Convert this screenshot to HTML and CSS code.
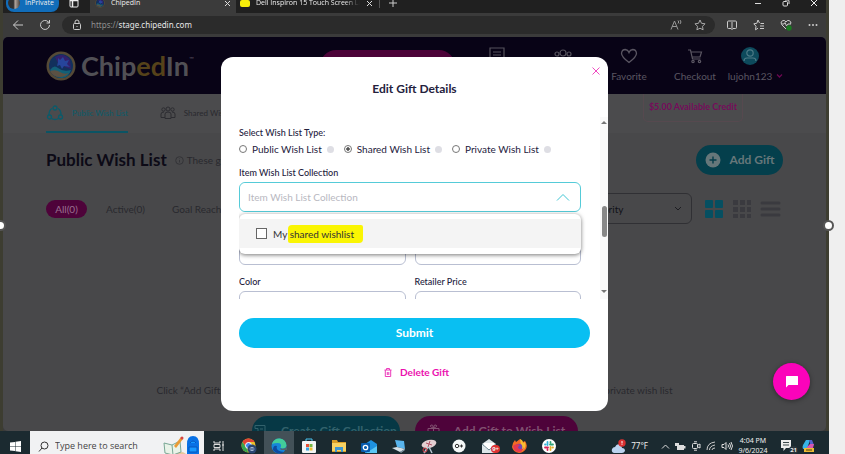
FILE: index.html
```html
<!DOCTYPE html>
<html lang="en">
<head>
<meta charset="utf-8">
<title>ChipedIn</title>
<link rel="stylesheet" href="styles.css">
</head>
<body>
<div class="screen">
  <div class="tabstrip">
    <div class="profile"><span class="avatar"></span>InPrivate</div>
    <svg class="workspaces" width="10" height="10" viewBox="0 0 10 10"><rect x="1" y="1" width="8" height="8" rx="1" fill="none" stroke="#eee"/><path d="M1 2.500h8M3.500 2v7" stroke="#eee" stroke-width="1.500"/></svg>
    <div class="tab tab-active">
      <svg width="10" height="10" viewBox="0 0 30 30"><use href="#chip-logo"/></svg>
      <span class="tab-title">ChipedIn</span><button class="tab-close" aria-label="Close ChipedIn tab"><svg width="7" height="7" viewBox="0 0 7 7" stroke="#ddd"><path d="M1 1l5 5M6 1L1 6"/></svg></button>
    </div>
    <div class="tab">
      <span class="marker"></span>
      <span class="tab-title tab-fade">Dell Inspiron 15 Touch Screen Lap</span><button class="tab-close" aria-label="Close Dell tab"><svg width="7" height="7" viewBox="0 0 7 7" stroke="#ddd"><path d="M1 1l5 5M6 1L1 6"/></svg></button>
    </div>
    <button class="new-tab" aria-label="New tab"><svg width="10" height="10" viewBox="0 0 10 10" stroke="#ccc"><path d="M5 1v8M1 5h8"/></svg></button>
    <div class="window-buttons">
      <svg width="8" height="8" viewBox="0 0 8 8" stroke="#ddd"><path d="M1 4.500h6"/></svg>
      <svg width="8" height="8" viewBox="0 0 8 8" stroke="#ddd" fill="none"><rect x="1" y="2.500" width="4.500" height="4.500" rx="1"/><path d="M3 1h3q1 0 1 1v3"/></svg>
      <svg width="8" height="8" viewBox="0 0 8 8" stroke="#eee"><path d="M1 1l6 6M7 1l-6 6"/></svg>
    </div>
  </div>
  <div class="toolbar">
    <button class="tool" aria-label="Back"><svg width="12" height="12" viewBox="0 0 12 12" fill="none" stroke="#ccc"><path d="M11 6H1.500M6 1.500L1.500 6L6 10.500"/></svg></button>
    <button class="tool" aria-label="Reload"><svg width="12" height="12" viewBox="0 0 12 12" fill="none" stroke="#ccc"><path d="M10.500 6a4.500 4.500 0 1 1-1.300-3.200L10.500 4M10.500 1v3h-3"/></svg></button>
    <div class="address">
      <svg width="10" height="12" viewBox="0 0 10 12" fill="none" stroke="#ccc"><rect x="1.500" y="4.500" width="7" height="6" rx="1"/><path d="M3 4.500V3a2 2 0 0 1 4 0v1.500M5 7v1"/></svg>
      <span class="url">https://<b>stage.chipedin.com</b></span>
      <svg width="12" height="12" viewBox="0 0 12 12" fill="none" stroke="#999"><path d="M1 10.500L4.500 2L8 10.500M2.200 7.500h4.600M8 1.500q1.500 1.500 0 3M10 1q2 2 0 4"/></svg>
      <svg width="12" height="12" viewBox="0 0 12 12" fill="none" stroke="#aaa"><path d="M6 1l1.500 3.300 3.500.5-2.500 2.500.6 3.500L6 9.200 2.900 10.800l.6-3.500L1 4.800l3.500-.5z"/></svg>
    </div>
    <div class="browser-actions">
      <svg width="12" height="12" viewBox="0 0 12 12" fill="none" stroke="#ccc"><path d="M5 2H2.500q-1 0-1 1v5.500q0 1 1 1H5M7 2h2.500q1 0 1 1v5.500q0 1-1 1H7M6 1v10"/></svg>
      <svg width="12" height="12" viewBox="0 0 12 12" fill="none" stroke="#ccc"><path d="M6.500 4L5 1 3.800 4.300.8 4.800 3 7.200l-.5 3.600L5 9.200M7.500 4.500H11M7 7h4M7 9.500h4"/></svg>
      <svg width="12" height="12" viewBox="0 0 12 12" fill="none" stroke="#ccc"><path d="M6 10L1.500 5.500Q0 2.500 3 1.500 5 1 6 3 7 1 9 1.500q3 1 1.500 4M2 5h2l1-1.500L6.500 7 8 5h2"/><circle cx="9" cy="9" r="2.700" fill="#187a20" stroke="none"/></svg>
      <svg width="12" height="12" viewBox="0 0 12 12" fill="#ccc"><circle cx="2.500" cy="6" r="1"/><circle cx="6" cy="6" r="1"/><circle cx="9.500" cy="6" r="1"/></svg>
    </div>
  </div>

  <main class="page">
    <header class="site-header">
      <a class="brand" href="#">
        <svg width="30" height="30" viewBox="0 0 30 30"><g id="chip-logo"><circle cx="15" cy="15" r="14.500" fill="#554a36"/><circle cx="15" cy="15" r="12" fill="#12305c"/><path d="M9 6q9-5 15 3l1 9-6-2-4-3-3-1z" fill="#32206b"/><path d="M12 7l2 2 3-3 2 4 4-1-2 4 3 3-6-1-2 3-2-4-3 1 1-4z" fill="#27459b"/><path d="M4 19q4-6 8-2 5 4 13 2-2 7-9 8-8 0-12-8z" fill="#126078"/><path d="M4 20q6-2 10 1t9 1q-4 4-9 4-7 0-10-6z" fill="#5b5143"/></g></svg>
        <span class="wordmark">Chip<em>ed</em>In</span><small>™</small>
      </a>
      <button class="header-cta" aria-label="Add gift"></button>
      <nav class="header-nav">
        <a href="#" aria-label="Lists"><svg width="18" height="18" viewBox="0 0 18 18" fill="none" stroke="#55525c" stroke-width="1.200"><path d="M2 16V1h14v9M5 5h8M5 8h8M5 11h5"/></svg></a>
        <a href="#" aria-label="Friends"><svg width="20" height="18" viewBox="0 0 20 18" fill="none" stroke="#55525c" stroke-width="1.200"><circle cx="10" cy="6" r="3"/><circle cx="4" cy="7" r="2"/><circle cx="16" cy="7" r="2"/></svg></a>
        <a href="#"><svg width="18" height="18" viewBox="0 0 18 18" fill="none" stroke="#5a5662" stroke-width="1.300"><path d="M9 15.500Q1.500 10 1.500 6.300 2 2.500 5.300 2.500 8 2.800 9 5.500 10 2.800 12.700 2.500 16 2.500 16.500 6.300 16.500 10 9 15.500z"/></svg>Favorite</a>
        <a href="#"><svg width="18" height="18" viewBox="0 0 18 18" fill="none" stroke="#5a5662" stroke-width="1.200"><path d="M2 3h2.500l2 9h8M5 5h10.500l-1.500 5H6"/><circle cx="7" cy="14.500" r="1.200"/><circle cx="13.500" cy="14.500" r="1.200"/></svg>Checkout</a>
        <a class="user" href="#"><svg width="18" height="18" viewBox="0 0 18 18"><circle cx="9" cy="9" r="9" fill="#0d4a5c"/><g fill="none" stroke="#4d7a86" stroke-width="1.200"><circle cx="9" cy="6" r="3.200"/><path d="M3 14q0-3 3-3h6q3 0 3 3"/></g></svg>lujohn123</a>
        <svg class="user-caret" width="7" height="6" viewBox="0 0 7 6" fill="none" stroke="#6a0850" stroke-width="1.300"><path d="M1 1.500l2.500 2.500L6 1.500"/></svg>
      </nav>
    </header>

    <nav class="list-tabs">
      <a class="list-tab current" href="#"><svg width="18" height="16" viewBox="0 0 18 16" fill="none" stroke="#0b5b6b" stroke-width="1.300"><path d="M6 3.500Q3 5 3 10M12 3.500q3 1.500 3 6.500M5.500 13.500q3.500 2 7 0"/><circle cx="9" cy="3" r="2"/><circle cx="3.500" cy="12" r="2"/><circle cx="14.500" cy="12" r="2"/></svg>Public Wish List</a>
      <a class="list-tab" href="#"><svg width="16" height="14" viewBox="0 0 16 14" fill="none" stroke="#2c2c31"><circle cx="8" cy="3" r="2"/><circle cx="3.500" cy="3.500" r="1.700"/><circle cx="12.500" cy="3.500" r="1.700"/><path d="M5 12.500V8q0-2 3-2t3 2v4.500zM5 11.500H1V8q0-2 3-2M11 11.500h4V8q0-2-3-2"/></svg>Shared Wish List</a>
      <span class="credit">$5.00 Available Credit</span>
    </nav>

    <section class="content">
      <div class="title-row">
        <h1>Public Wish List</h1>
        <p><svg width="9" height="9" viewBox="0 0 9 9" fill="none" stroke="#343438"><circle cx="4.500" cy="4.500" r="3.800"/><path d="M4.500 4v2.500M4.500 2.500v.6"/></svg>These gifts</p>
        <button class="add-gift"><svg width="16" height="16" viewBox="0 0 16 16"><circle cx="8" cy="8" r="7.500" fill="#66777a"/><path d="M8 4.500v7M4.500 8h7" stroke="#053d4a" stroke-width="1.400"/></svg>Add Gift</button>
      </div>
      <div class="filter-row">
        <button class="chip chip-on">All(0)</button>
        <button class="chip">Active(0)</button>
        <button class="chip">Goal Reached</button>
        <div class="sort">
          <select aria-label="Sort"><option>Priority</option></select>
          <svg width="8" height="6" viewBox="0 0 8 6" fill="none" stroke="#1d1d22"><path d="M1 1l3 3 3-3"/></svg>
        </div>
        <svg width="20" height="20" viewBox="0 0 20 20" fill="#064f61"><rect x="1" y="1" width="8" height="8" rx="1"/><rect x="11" y="1" width="8" height="8" rx="1"/><rect x="1" y="11" width="8" height="8" rx="1"/><rect x="11" y="11" width="8" height="8" rx="1"/></svg>
        <svg width="20" height="20" viewBox="0 0 20 20" fill="#3a3a3f"><path d="M1 1h5v5H1zM8 1h5v5H8zM15 1h4v5h-4zM1 8h5v5H1zM8 8h5v5H8zM15 8h4v5h-4zM1 15h5v4H1zM8 15h5v4H8zM15 15h4v4h-4z"/></svg>
        <svg width="21" height="20" viewBox="0 0 21 20" stroke="#3a3a3f" stroke-width="3" stroke-linecap="round"><path d="M2 4h17M2 10h17M2 16h17"/></svg>
      </div>
      <div class="hint"><span>Click “Add Gift</span><span>private wish list</span></div>
      <div class="bottom-actions">
        <button class="create"><svg width="13" height="14" viewBox="0 0 13 14" fill="none" stroke="#33626c"><path d="M1 1.500h10v11H4v-8H1zM6 5h3M6 8h3"/></svg>Create Gift Collection</button>
        <button class="wish"><svg width="13" height="14" viewBox="0 0 13 14" fill="none" stroke="#805070"><path d="M1 4.500h11v3H1zM2 7.500h9v5H2zM6.500 4v9M6.500 4Q2 3 4 1q2-1 2.500 3 .5-4 2.500-3 2 2-2.500 3"/></svg>Add Gift to Wish List</button>
      </div>
    </section>

    <div class="overlay">
      <form class="modal" role="dialog" aria-label="Edit Gift Details">
        <button type="button" class="modal-close" aria-label="Close"><svg width="8" height="8" viewBox="0 0 8 8" stroke="#ee4cc0"><path d="M.5 .5l7 7M7.500 .5l-7 7"/></svg></button>
        <h2>Edit Gift Details</h2>
        <div class="scroller">
          <div class="fields">
            <fieldset class="types">
              <legend>Select Wish List Type:</legend>
              <div class="radios">
                <label><input type="radio" name="type">Public Wish List<i class="info"></i></label>
                <label><input type="radio" name="type" checked>Shared Wish List<i class="info"></i></label>
                <label><input type="radio" name="type">Private Wish List<i class="info"></i></label>
              </div>
            </fieldset>
            <div class="field collection">
              <label for="collection">Item Wish List Collection</label>
              <div class="combo">
                <input id="collection" type="text" placeholder="Item Wish List Collection">
                <svg width="14" height="8" viewBox="0 0 14 8" fill="none" stroke="#3fc5d3"><path d="M1 7.500l6-6 6 6"/></svg>
              </div>
              <div class="menu">
                <label class="option"><input type="checkbox"><span>My <mark>shared wishlist</mark></span></label>
              </div>
            </div>
            <div class="pairs">
              <div class="field"><label for="brand">Brand</label><input id="brand" type="text"></div>
              <div class="field"><label for="size">Size</label><input id="size" type="text"></div>
              <div class="field"><label for="color">Color</label><input id="color" type="text"></div>
              <div class="field"><label for="price">Retailer Price</label><input id="price" type="text"></div>
            </div>
          </div>
          <div class="track"><i class="arrow-up"></i><i class="thumb"></i><i class="arrow-down"></i></div>
        </div>
        <button type="submit" class="submit">Submit</button>
        <button type="button" class="delete"><svg width="8" height="9" viewBox="0 0 8 9" fill="none" stroke="#ec3bbb"><path d="M.5 2h7M2.500 2V.5h3V2M1.300 2v6.500h5.400V2M3.300 4v3M4.800 4v3"/></svg>Delete Gift</button>
      </form>
    </div>
    <button class="chat" aria-label="Chat"><svg width="14" height="13" viewBox="0 0 14 13"><path d="M1.500 1h11q.5 0 .5.500V9.500q0 .5-.5.500H3.500L1 12.500V1.500Q1 1 1.500 1z" fill="#fff"/></svg></button>
  </main>

  <footer class="taskbar">
    <button class="start" aria-label="Start"><svg width="11" height="11" viewBox="0 0 11 11" fill="#fff"><path d="M0 1.500L5 1v4H0zM5.500 .8L11 0v5H5.500zM0 5.500h5v4.500L0 9.500zM5.500 5.500H11V11l-5.500-.8z"/></svg></button>
    <div class="search">
      <svg width="11" height="11" viewBox="0 0 11 11" fill="none" stroke="#333"><circle cx="6.500" cy="4.500" r="3.500"/><path d="M4 7L1 10.500"/></svg>
      <input type="text" aria-label="Search" placeholder="Type here to search">
      <svg width="44" height="22" viewBox="0 0 40 22"><path d="M0 22q6-6 13-4 8-4 14 4z" fill="#e7c79c"/><path d="M2 8l8 2 8-4 1 11-8 3-8-2z" fill="#e9f3e8" stroke="#79a795"/><path d="M10 10l1 10" stroke="#79a795"/><path d="M12 11L19 2l2 2-7 9z" fill="#e99b35"/><circle cx="20" cy="3" r="1.500" fill="#d84444"/><path d="M25 9q0-8 6-8t6 8v10H25z" fill="#0871e5"/><path d="M27 12h8v5h-8zM28 8q3-4 6 0" fill="#1698ff" stroke="#0757bd"/></svg>
    </div>
    <div class="apps">
      <span class="app"><svg width="12" height="12" viewBox="0 0 12 12" fill="none" stroke="#ddd"><path d="M1 1v2h6V1M1 11V9h6v2M1 4.500h6v3H1zM10 1v10M9 5h2"/></svg></span>
      <span class="app"><svg width="16" height="16" viewBox="0 0 16 16"><circle cx="7.500" cy="7.500" r="7" fill="#efc029"/><path d="M1.500 4a7 7 0 0 1 12 0H7.500L5 9z" fill="#e24335"/><path d="M1.500 4L6 11l1 3.500A7 7 0 0 1 1.500 4z" fill="#36a451"/><circle cx="7.500" cy="7.500" r="3" fill="#4386ee" stroke="#fff"/><circle cx="11" cy="11" r="4.500" fill="#2b4774"/><path d="M8.500 11h5M9.500 9.500h3M9.500 12.500h3" stroke="#9fb3d1"/></svg></span>
      <span class="app app-on"><svg width="16" height="16" viewBox="0 0 16 16"><circle cx="8" cy="8" r="7.500" fill="#1686d9"/><path d="M1 6Q3 0 9 .5q6 1 6.500 7-1 4-6 2.500 2-5-3-5-3 0-5.500 1z" fill="#42cd9a"/><path d="M6 8q-2 5 7 6-6 4-11-2Q2 7 6 8z" fill="#0e4aa0"/><path d="M9 10q3 2 7-1v3H10z" fill="#50666a"/></svg></span>
      <span class="app"><svg width="14" height="16" viewBox="0 0 14 16"><path d="M4 4V1h6v3" fill="none" stroke="#4ac3ef"/><rect y="3" width="14" height="12" rx="1" fill="#f2f4f4"/><path d="M4 6h3v3H4z" fill="#e94e35"/><path d="M7.500 6h3v3h-3z" fill="#75b843"/><path d="M4 9.500h3v3H4z" fill="#34a3e5"/><path d="M7.500 9.500h3v3h-3z" fill="#efbd30"/></svg></span>
      <span class="app"><svg width="14" height="14" viewBox="0 0 14 14"><path d="M0 1h5l1 2h8v10H0z" fill="#d99f28"/><path d="M0 4h14v8H0z" fill="#f6d263"/><path d="M3 13V8h8v5H9v-2H5v2z" fill="#3d97d2"/></svg></span>
      <span class="app"><svg width="16" height="15" viewBox="0 0 16 15"><path d="M4 5l6-4 6 4v9H4z" fill="#1e91df"/><path d="M5 14l11-7v7z" fill="#5bc7f5"/><rect y="4" width="9" height="9" rx="1" fill="#075cae"/><circle cx="4.500" cy="8.500" r="2.200" fill="none" stroke="#fff" stroke-width="1.300"/></svg></span>
      <span class="app"><svg width="15" height="14" viewBox="0 0 15 14"><path d="M3 1l9 1 1 8-8-2z" fill="#58b4ec"/><path d="M0 9l5-1 8 2-5 3z" fill="#d4dfe5"/><path d="M8 13l5-3v1l-4 3z" fill="#849ba7"/></svg></span>
      <span class="app"><svg width="16" height="15" viewBox="0 0 16 15"><ellipse cx="8" cy="5" rx="7.500" ry="4" fill="#e3cfd2" transform="rotate(-14 8 5)"/><path d="M5 4l6 2M9 2L7 8" stroke="#b35468"/><path d="M7 8l-4 6M8 8l3 6" stroke="#b9c6d2" stroke-width="1.500"/><circle cx="4" cy="11" r="2" fill="none" stroke="#d43e48"/></svg></span>
      <span class="app"><svg width="14" height="14" viewBox="0 0 14 14"><circle cx="7" cy="7" r="6.500" fill="#f5f8f8"/><circle cx="5" cy="7" r="1.700" fill="none" stroke="#333"/><path d="M7.500 7H11M9.500 5.500v3" stroke="#333"/></svg></span>
      <span class="app"><svg width="17" height="16" viewBox="0 0 17 16"><path d="M1 6l7-5 7 5v9H1z" fill="#dce5e8"/><path d="M3 5h10v4l-5 3-5-3z" fill="#fff"/><path d="M1 6l7 6 7-6" fill="none" stroke="#6c8792"/></svg><b class="badge badge-red">9+</b></span>
      <span class="app"><svg width="15" height="16" viewBox="0 0 15 16"><path d="M1 5l2-3 1 2 4-3 3 3 2-1q3 4 1 8-3 4-7 4-6-1-7-6z" fill="#f46a24"/><path d="M8 1q3 1 3 4l2-1q2 6-3 9z" fill="#f8bf30"/><circle cx="7" cy="9" r="3.300" fill="#7645b5"/><path d="M1 8q3-3 7-1-2 1-2 3 4 3 6-1-1 5-5 5-5 0-6-6z" fill="#e63850"/></svg></span>
      <span class="app"><svg width="14" height="14" viewBox="0 0 14 14"><circle cx="7" cy="7" r="7" fill="#fff"/><g stroke-width="1.800" stroke-linecap="round"><path d="M5.500 3v3M3 5.500h.5" stroke="#36b4da"/><path d="M8 5.500h3M8.500 3v.5" stroke="#30a477"/><path d="M8.500 8v3M10.500 8.500h.5" stroke="#e5ac2c"/><path d="M3 8.500h3M5.500 10.500v.5" stroke="#d52458"/></g></svg></span>
    </div>
    <div class="weather"><svg width="15" height="15" viewBox="0 0 15 15"><path d="M3 14q-3-1-2-4 1-2 3-2 2-4 5-2 2 1 2 3 3 0 3 3-1 2-3 2z" fill="#bcd3ef"/><circle cx="11" cy="4" r="3.700" fill="#d83030"/><path d="M11 2v2.500M11 5.300v.7" stroke="#fff"/></svg>77°F</div>
    <div class="tray">
      <svg width="9" height="9" viewBox="0 0 9 9" fill="none" stroke="#ddd"><path d="M1 6.500L4.500 3 8 6.500"/></svg>
      <svg width="11" height="9" viewBox="0 0 11 9"><path d="M2 3h7v5H2z" fill="#ddd"/><path d="M0 1h4v3H0zM9 4h1.500v2.500H9z" fill="#ddd"/></svg>
      <svg width="10" height="10" viewBox="0 0 10 10" fill="none" stroke="#ddd"><rect x="1.500" y="2.500" width="5" height="5" rx="1"/><path d="M3 .8h3M3 9.200h3M7 4l2-1v4L7 6"/></svg>
      <svg width="10" height="10" viewBox="0 0 10 10" fill="none" stroke="#ccc"><path d="M1 9Q1 2 9 1M3.500 9q0-4 5.500-5M6 9q0-2 3-2"/></svg>
      <svg width="12" height="10" viewBox="0 0 12 10" fill="none" stroke="#ddd"><path d="M1 3.500h2L5 1.500v7l-2-2H1zM7 3.500q1 1.500 0 3M8.500 2q2 3 0 6M10 1q3 4 0 8"/></svg>
    </div>
    <div class="clock"><span>4:04 PM</span><span>9/6/2024</span></div>
    <div class="notices"><svg width="13" height="12" viewBox="0 0 13 12"><path d="M1 0h10v8H6L3.500 11V8H1z" fill="#eee"/><path d="M3 2.500h6M3 5h6" stroke="#3b484b"/></svg><b class="badge badge-dark">21</b></div>
    <svg class="copilot" width="13" height="14" viewBox="0 0 13 14"><path d="M4 1h4l-3 9H1q-1-2 0-4z" fill="#36b2e5"/><path d="M7 1h3l2 5-3 2z" fill="#5461ce"/><path d="M5 8l3-3h4l-2 8H4z" fill="#d657b2"/><path d="M2 9h10v4H2z" fill="#edba35"/><path d="M4 11h6" stroke="#4f3d12"/></svg>
  </footer>
  <i class="handle handle-left"></i><i class="handle handle-right"></i>
</div>
</body>
</html>
```
FILE: styles.css
```css
* { box-sizing: border-box; }
body { margin: 0; height: 100vh; overflow: hidden; background: #efefef; font-family: Lato, "Liberation Sans", sans-serif; font-size: 10px; line-height: 12px; }
button, input, select { font: inherit; margin: 0; }
button { border: 0; padding: 0; background: none; color: inherit; display: flex; align-items: center; justify-content: center; }
a { color: inherit; text-decoration: none; }
h1, h2, p { margin: 0; }
svg { flex: none; display: block; }

.screen { position: relative; height: 100vh; margin-right: 16px; border: solid #3d3d31; border-width: 0 3px; display: flex; flex-direction: column; background: #3b3b3b; }

.tabstrip { flex: none; height: 20px; margin-top: -7px; display: flex; align-items: center; background: #202020; color: #eee; font: 7px/10px "Open Sans", sans-serif; }
.profile { flex: none; height: 18px; width: 53px; border-radius: 8px; background: #116dba; display: flex; align-items: center; gap: 5px; padding-left: 2px; margin: 0 10px 0 3px; }
.avatar { flex: none; width: 12px; height: 12px; border-radius: 50%; background: linear-gradient(90deg, #313131 45%, #b0a49c 60%, #46403c); }
.workspaces { margin-right: 11px; }
.tab { height: 20px; display: flex; align-items: center; gap: 6px; width: 142px; padding: 0 5px 0 4px; }
.tab-active { background: #3b3b3b; width: 146px; padding-left: 5px; border-radius: 6px 6px 0 0; }
.tab-title { flex: 1; overflow: hidden; white-space: nowrap; }
.tab-fade { -webkit-mask-image: linear-gradient(90deg, #000 85%, transparent); mask-image: linear-gradient(90deg, #000 85%, transparent); }
.marker { width: 10px; height: 7px; border-radius: 2px; background: #f7ee0a; }
.new-tab { border-left: 1px solid #555; padding-left: 8px; margin-left: 1px; }
.window-buttons { margin-left: auto; display: flex; gap: 20px; padding-right: 8px; }

.toolbar { flex: none; height: 24px; display: flex; align-items: center; background: #3b3b3b; }
.tool { width: 27px; }
.tool:first-child { margin-left: 1px; }
.address { flex: 1; height: 18px; margin-left: 4px; padding: 0 9px 0 10px; border-radius: 9px; background: #2b2b2b; display: flex; align-items: center; gap: 12px; }
.url { flex: 1; color: #8f8f8f; font: 8px/12px "Noto Sans", sans-serif; margin-left: -3px; }
.url b { color: #e8e8e8; font-weight: 400; }
.browser-actions { display: flex; gap: 15px; padding: 0 7px 0 11px; }

.page { position: relative; flex: 1; min-height: 0; overflow: hidden; display: flex; flex-direction: column; border-radius: 5px; background: #48484a; color: #29292e; }
.site-header { flex: none; height: 57px; padding: 0 43px; display: flex; background: #080316; color: #5a5662; }
.brand { display: flex; align-items: center; margin-right: auto; }
.wordmark { font-size: 27px; line-height: 32px; font-weight: 700; color: #515055; margin-left: 5px; }
.wordmark em { font-style: normal; color: #55421a; }
.brand small { font-size: 6px; align-self: flex-start; margin-top: 16px; }
.header-cta { width: 135px; height: 32px; margin: 13px 9px 0 0; border-radius: 16px; background: #4c0338; }
.header-nav { display: flex; padding-top: 10px; }
.header-nav a { width: 66px; display: flex; flex-direction: column; align-items: center; gap: 5px; }
.header-nav .user { width: 44px; }
.user-caret { margin: 26px 0 0 4px; }

.list-tabs { flex: none; height: 39px; padding: 0 83px 0 43px; display: flex; gap: 32px; background: #4b4b4d; font-size: 9px; }
.list-tab { display: flex; align-items: center; gap: 8px; border-bottom: 2px solid transparent; white-space: nowrap; font-size: 8px; }
.current { color: #0b5b6b; border-color: #0b5464; }
.credit { margin-left: auto; align-self: flex-start; height: 28px; padding: 7px 5px; border: 1px solid #56494f; border-top: 0; border-radius: 0 0 5px 5px; color: #760b5b; font-weight: 700; }

.content { flex: 1; min-height: 0; padding: 12px 43px 0; display: flex; flex-direction: column; }
.title-row, .filter-row { display: flex; align-items: center; }
.title-row h1 { font-size: 17px; line-height: 22px; font-weight: 700; color: #0c0a16; }
.title-row p { display: flex; align-items: center; gap: 3px; margin-left: 8px; }
.add-gift { margin-left: auto; height: 30px; width: 87px; border-radius: 15px; gap: 9px; background: #043f4c; color: #66777a; font-size: 12px; font-weight: 700; }
.filter-row { margin-top: 18px; gap: 8px; padding-right: 2px; }
.chip { height: 18px; padding: 0 8px; border-radius: 9px; margin-right: 3px; }
.chip-on { width: 41px; background: #4e033a; color: #9a7090; }
.sort { margin-left: auto; margin-right: 4px; width: 130px; height: 31px; padding-right: 9px; display: flex; align-items: center; border: 1px solid #303034; border-radius: 6px; }
.sort select { flex: 1; appearance: none; padding: 0 28px; height: 29px; border: 0; background: none; color: #111118; }
.hint { width: 516px; max-width: 100%; margin: 160px auto 0; display: flex; justify-content: space-between; }
.bottom-actions { display: flex; justify-content: center; gap: 15px; margin-top: 20px; font-size: 12px; font-weight: 700; }
.bottom-actions button { height: 30px; border-radius: 15px; gap: 14px; white-space: nowrap; }
.create { width: 148px; background: #063845; color: #33626c; }
.wish { width: 163px; background: #4e033a; color: #805070; }

.overlay { position: absolute; inset: 0; display: grid; place-items: center; }
.modal { position: relative; width: 387px; padding: 24px 0 33px 18px; border-radius: 12px; background: #fff; color: #24213d; }
.modal-close { position: absolute; top: 10px; right: 8px; }
.modal h2 { font-size: 12px; line-height: 16px; font-weight: 700; text-align: center; padding-right: 18px; }
.scroller { height: 182px; margin-top: 20px; overflow: hidden; display: flex; justify-content: space-between; }
.fields { width: 342px; padding-top: 10px; font-size: 9px; }
.types { border: 0; padding: 0; margin: 0; min-width: 0; }
.types legend { padding: 0; font-weight: 500; }
.radios { display: flex; gap: 10px; margin-top: 4px; margin-bottom: 12px; font-size: 10px; }
.radios label { display: flex; align-items: center; white-space: nowrap; }
.radios input { appearance: none; width: 8px; height: 8px; margin-right: 5px; border: 1px solid #777; border-radius: 50%; }
.radios input:checked { background: radial-gradient(#555 35%, #fff 45%); }
.info { width: 7px; height: 7px; border-radius: 50%; background: #dedee4; margin-left: 5px; }
.field { display: flex; flex-direction: column; gap: 3px; }
.field > label { font-weight: 500; }
.field input[type="text"] { width: 100%; height: 30px; border: 1px solid #b9bfd2; border-radius: 6px; padding: 0 8px; background: #fff; }
.collection { position: relative; margin-bottom: 8px; }
.combo { height: 30px; display: flex; align-items: center; border: 1px solid #55cbd8; border-radius: 6px; padding-right: 10px; }
.field .combo input[type="text"] { flex: 1; height: 28px; border: 0; font-size: 10px; }
.combo input::placeholder { color: #b8b8bf; }
.menu { position: absolute; top: 47px; left: 0; right: 0; padding: 5px 0 6px; border-radius: 6px; background: #fff; box-shadow: 0 1px 4px #0008; }
.option { display: flex; align-items: center; gap: 6px; height: 29px; padding-left: 17px; background: #f4f4f4; font-size: 10px; color: #333; }
.option input { appearance: none; width: 11px; height: 11px; border: 1px solid #666; background: #fff; }
.option mark { background: #faf503; color: inherit; border-radius: 4px 2px; padding: 3px 9px 3px 2px; margin-left: -2px; }
.pairs { display: grid; grid-template-columns: 1fr 1fr; gap: 11px 9px; }
.track { width: 8px; display: flex; flex-direction: column; align-items: center; background: #fafafa; padding: 4px 0 6px; }
.arrow-up, .arrow-down { border: 3px solid transparent; }
.arrow-up { border-bottom-color: #777; border-top: 0; }
.arrow-down { border-top-color: #777; border-bottom: 0; }
.thumb { width: 5px; height: 31px; margin: 82px 0 auto; border-radius: 3px; background: #888; }
.submit { width: calc(100% - 18px); height: 30px; margin-top: 19px; border-radius: 15px; background: #09bff2; color: #fff; font-size: 12px; font-weight: 700; }
.delete { margin: 18px auto 0; gap: 8px; padding-right: 14px; color: #eb0fae; font-weight: 700; }
.chat { position: absolute; right: 16px; bottom: 31px; width: 37px; height: 37px; border-radius: 50%; background: #fb03ba; box-shadow: 0 1px 5px #0006; }

.taskbar { flex: none; height: 30px; margin: 0 -3px -7px; display: flex; align-items: center; background: #1b2a30; color: #eee; font: 8px/12px "Noto Sans", sans-serif; }
.start { width: 30px; }
.search { width: 174px; height: 30px; padding: 0 0 0 8px; display: flex; align-items: center; background: #f1f2f3; }
.search input { flex: 1; min-width: 0; border: 0; padding: 0 0 0 6px; background: none; font: 9px/12px "Open Sans", sans-serif; }
.search input::placeholder { color: #444; }
.apps { display: flex; height: 30px; }
.app { position: relative; width: 30px; display: grid; place-items: center; }
.app-on { background: #435158; }
.badge { position: absolute; font-size: 6px; line-height: 8px; border-radius: 5px; padding: 0 1px; }
.badge-red { right: 4px; bottom: 8px; background: #dd3030; }
.weather { margin-left: auto; display: flex; align-items: center; gap: 5px; }
.tray { display: flex; align-items: center; gap: 5px; margin-left: 13px; }
.clock { width: 40px; display: flex; flex-direction: column; align-items: center; line-height: 10px; font-size: 7px; }
.notices { position: relative; width: 25px; padding-left: 7px; }
.badge-dark { right: 0; bottom: -2px; background: #28343a; }
.copilot { margin: 0 14px 0 4px; }

.handle { position: absolute; top: 220px; width: 11px; height: 11px; border: 2px solid #555; border-radius: 50%; background: #fff; }
.handle-left { left: -8px; }
.handle-right { right: -8px; }
```
